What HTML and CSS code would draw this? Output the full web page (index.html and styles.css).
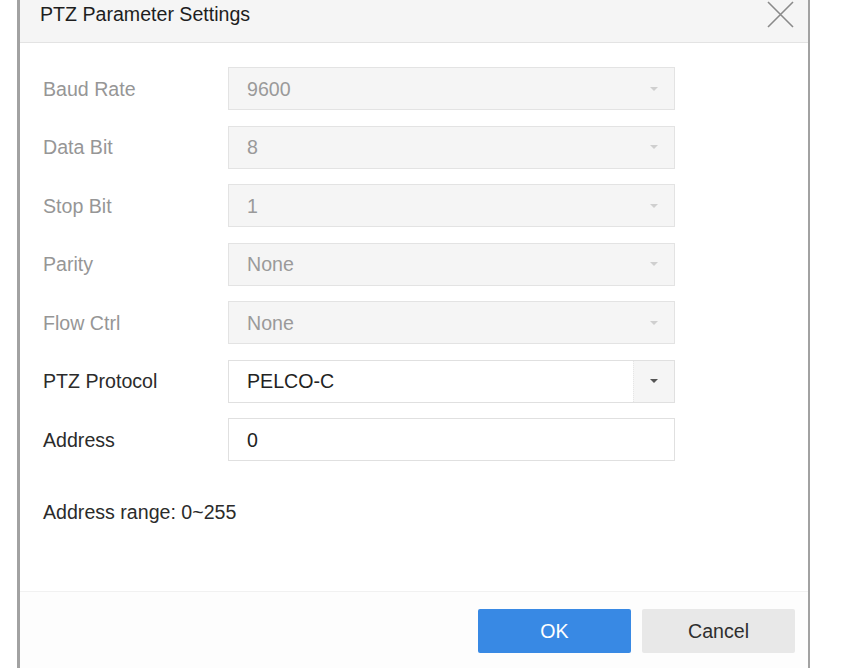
FILE: index.html
```html
<!DOCTYPE html>
<html lang="en">
<head>
<meta charset="utf-8">
<title>PTZ Parameter Settings</title>
<link rel="stylesheet" href="styles.css">
</head>
<body>
<div class="dialog">
  <div class="header">
    <span class="title">PTZ Parameter Settings</span>
    <svg class="close" width="27" height="27" viewBox="0 0 27 27" aria-label="Close">
      <path d="M1 1 L26 26 M26 1 L1 26" stroke="#8a8a8a" stroke-width="1.6" fill="none"/>
    </svg>
  </div>
  <div class="body">
    <div class="row disabled">
      <span class="label">Baud Rate</span>
      <div class="field select"><span class="value">9600</span><span class="caret-box"><span class="caret"></span></span></div>
    </div>
    <div class="row disabled">
      <span class="label">Data Bit</span>
      <div class="field select"><span class="value">8</span><span class="caret-box"><span class="caret"></span></span></div>
    </div>
    <div class="row disabled">
      <span class="label">Stop Bit</span>
      <div class="field select"><span class="value">1</span><span class="caret-box"><span class="caret"></span></span></div>
    </div>
    <div class="row disabled">
      <span class="label">Parity</span>
      <div class="field select"><span class="value">None</span><span class="caret-box"><span class="caret"></span></span></div>
    </div>
    <div class="row disabled">
      <span class="label">Flow Ctrl</span>
      <div class="field select"><span class="value">None</span><span class="caret-box"><span class="caret"></span></span></div>
    </div>
    <div class="row">
      <span class="label">PTZ Protocol</span>
      <div class="field select"><span class="value">PELCO-C</span><span class="caret-box"><span class="caret"></span></span></div>
    </div>
    <div class="row">
      <span class="label">Address</span>
      <div class="field input"><span class="value">0</span></div>
    </div>
    <p class="hint">Address range: 0~255</p>
  </div>
  <div class="footer">
    <button class="btn ok">OK</button>
    <button class="btn cancel">Cancel</button>
  </div>
</div>
</body>
</html>
```

FILE: styles.css
```css
html, body {
  margin: 0;
  padding: 0;
  background: #ffffff;
  height: 100%;
  overflow: hidden;
}

body {
  font-family: "Liberation Sans", Arial, sans-serif;
  font-size: 19.6px;
  color: #2b2b2b;
}

.dialog {
  box-sizing: border-box;
  margin-left: 17px;
  width: 793px;
  height: 668px;
  border-left: 3px solid #a2a2a2;
  border-right: 2px solid #a2a2a2;
  display: flex;
  flex-direction: column;
  background: #ffffff;
}

.header {
  box-sizing: border-box;
  height: 43px;
  flex: none;
  background: #f5f5f5;
  border-bottom: 1.5px solid #e3e3e3;
  display: flex;
  justify-content: space-between;
  align-items: flex-start;
  padding-left: 20px;
  padding-right: 14.5px;
}

.title {
  line-height: 29px;
  color: #1e1e1e;
}

.close {
  display: block;
  margin-top: 0.5px;
}

.body {
  flex: 1;
  padding: 24px 0 0 23px;
}

.row {
  display: flex;
  align-items: center;
  height: 43px;
  margin-bottom: 15.5px;
}

.label {
  width: 185px;
  flex: none;
  color: #2b2b2b;
  padding-top: 1px;
}

.field {
  box-sizing: border-box;
  width: 447px;
  height: 43px;
  border: 1.5px solid #e0e0e0;
  background: #ffffff;
  display: flex;
  align-items: center;
}

.value {
  flex: 1;
  padding-left: 18px;
  padding-top: 1px;
  color: #222222;
}

.caret-box {
  width: 40px;
  align-self: stretch;
  background: #f5f5f5;
  border-left: 1px dotted #e6e6e6;
  display: flex;
  align-items: center;
  justify-content: center;
}

.caret {
  width: 0;
  height: 0;
  border-left: 4.5px solid transparent;
  border-right: 4.5px solid transparent;
  border-top: 4.5px solid #555555;
}

.row.disabled .label {
  color: #969696;
}

.row.disabled .field {
  background: #f5f5f5;
  border-color: #e3e3e3;
}

.row.disabled .value {
  color: #9a9a9a;
}

.row.disabled .caret-box {
  border-left: none;
}

.row.disabled .caret {
  border-top-color: #cfcfcf;
}

.hint {
  margin: 39px 0 0 0;
  line-height: 24px;
  color: #2b2b2b;
}

.footer {
  box-sizing: border-box;
  height: 77px;
  flex: none;
  border-top: 1.5px solid #f1f1f1;
  background: #fdfdfd;
  display: flex;
  justify-content: flex-end;
  align-items: flex-start;
  gap: 11px;
  padding: 16.5px 13px 0 0;
}

.btn {
  width: 153px;
  height: 44px;
  border: none;
  border-radius: 2px;
  font-family: "Liberation Sans", Arial, sans-serif;
  font-size: 19.6px;
  padding: 2px 0 0 0;
}

.btn.ok {
  background: #3889e4;
  color: #ffffff;
}

.btn.cancel {
  background: #e8e8e8;
  color: #2e2e2e;
}
```
